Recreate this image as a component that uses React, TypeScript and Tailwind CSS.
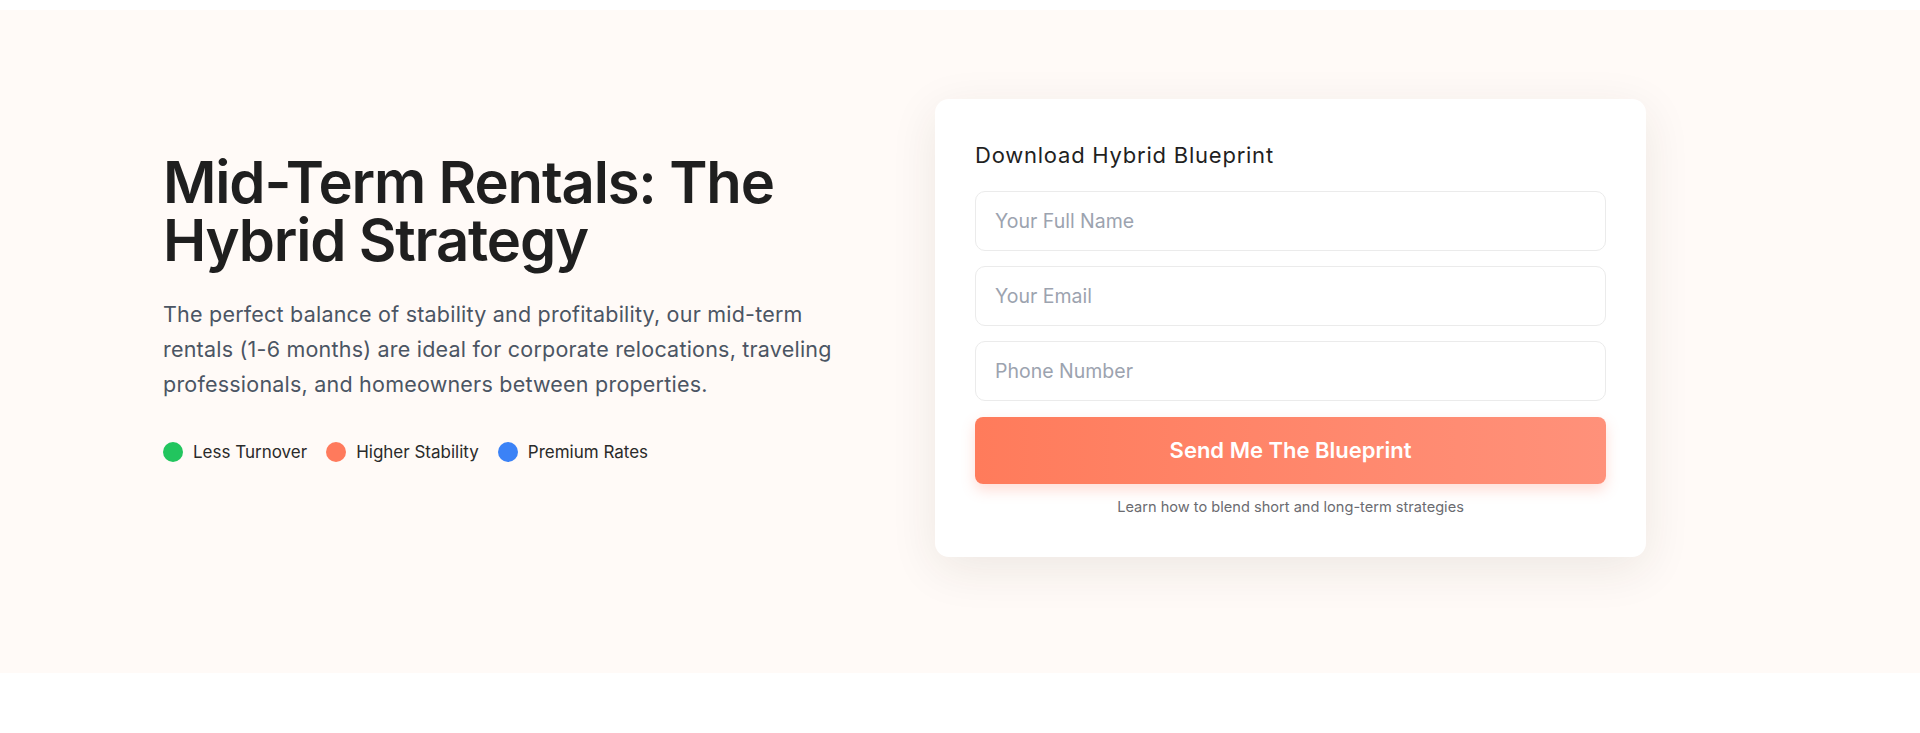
import React from "react";

export default function App() {
  const font = { fontFamily: "Inter, 'Noto Sans', sans-serif" };
  const inputCls =
    "h-[60px] w-full rounded-[10px] border border-[#ebebeb] px-[19px] text-[19.5px] text-[#1f1f1f] placeholder:text-[#9ca3af] outline-none bg-white";
  return (
    <div className="w-full bg-white" style={font}>
      <div className="h-[10px] bg-white" />
      <section className="bg-[#fffaf7] pt-[89px] pb-[116px]">
        <div className="flex items-start pl-[163px]">
          <div className="w-[690px] flex flex-col pt-[54px]">
            <h1 className="text-[58px] leading-[58px] font-semibold tracking-[-0.02em] text-[#1f1f1f]">
              Mid-Term Rentals: The
              <br />
              Hybrid Strategy
            </h1>
            <p className="mt-[28px] text-[21.5px] leading-[35px] tracking-[0.01em] text-[#4b5563] max-w-[690px]">
              The perfect balance of stability and profitability, our mid-term rentals (1-6 months) are ideal for corporate relocations, traveling professionals, and homeowners between properties.
            </p>
            <div className="mt-[37px] flex items-center gap-[19px] text-[17px] leading-[26px] text-[#2a2a2a]">
              <div className="flex items-center gap-[10px]">
                <span className="w-[20px] h-[20px] rounded-full bg-[#22c55e]" />
                <span>Less Turnover</span>
              </div>
              <div className="flex items-center gap-[10px]">
                <span className="w-[20px] h-[20px] rounded-full bg-[#ff7a5c]" />
                <span>Higher Stability</span>
              </div>
              <div className="flex items-center gap-[10px]">
                <span className="w-[20px] h-[20px] rounded-full bg-[#3b82f6]" />
                <span>Premium Rates</span>
              </div>
            </div>
          </div>
          <div className="ml-[82px] w-[711px] bg-white rounded-[14px] shadow-[0_12px_48px_rgba(60,40,20,0.09)] px-[40px] pt-[40px] pb-[40px]">
            <h2 className="text-[22px] leading-[32px] font-normal tracking-[0.035em] text-[#1f1f1f]">
              Download Hybrid Blueprint
            </h2>
            <form className="mt-[20px] flex flex-col gap-[15px]" onSubmit={(e) => e.preventDefault()}>
              <input className={inputCls} placeholder="Your Full Name" />
              <input className={inputCls} placeholder="Your Email" />
              <input className={inputCls} placeholder="Phone Number" />
              <button
                type="submit"
                className="mt-[1px] h-[67px] w-full rounded-[8px] bg-gradient-to-r from-[#ff7b5b] to-[#ff917a] text-white text-[22px] font-semibold shadow-[0_6px_14px_rgba(255,120,90,0.25)]"
              >
                Send Me The Blueprint
              </button>
            </form>
            <p className="mt-[13px] text-center text-[14.6px] leading-[20px] text-[#6b6b70]">
              Learn how to blend short and long-term strategies
            </p>
          </div>
        </div>
      </section>
    </div>
  );
}
